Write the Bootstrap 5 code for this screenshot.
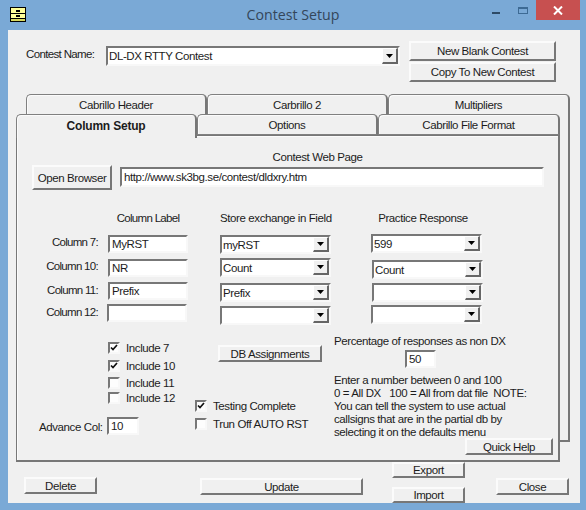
<!DOCTYPE html>
<html lang="en">
<head>
<meta charset="utf-8">
<title>Contest Setup</title>
<link href="https://cdn.jsdelivr.net/npm/bootstrap@5.3.0/dist/css/bootstrap.min.css" rel="stylesheet">
<style>
html,body{margin:0;height:510px;width:586px;overflow:hidden}
body{background:#7aa9d6;font:11.5px/14px "Liberation Sans",Arial,sans-serif;color:#1c1c1c;letter-spacing:-.4px}
.win-title{height:30px;display:grid;grid-template-columns:1fr auto 1fr}
.win-icon{margin:7px 0 0 10px;display:block}
.win-name{font:14.2px/30px "Open Sans",sans-serif;color:#34465a;letter-spacing:0}
.win-ctrls{display:flex;justify-content:flex-end;margin-right:6px;align-items:flex-start}
.win-min{width:8px;height:2px;background:#2d4a66;margin:12px 18px 0 0}
.win-max{width:10px;height:7px;border:1px solid #3d6a94;border-top-width:2px;margin:7px 8px 0 0}
.win-close{width:44px;height:20px;background:#c75050;color:#fff;display:flex;align-items:center;justify-content:center}
.client{margin:0 6px 0 8px;height:473px;background:#f0f0f0}
.top-row{padding-top:11px;height:52px}
.name-lbl{margin:6px 0 0 18px;width:80px;letter-spacing:-.65px}
.name-combo{margin-top:5px;width:294px;height:20px}
.stack-top{margin-left:9px;width:147px}
.btn.raised{padding:0;border-radius:0;background:#f0f0f0;color:#1c1c1c;font:inherit;letter-spacing:inherit;border:2px solid;border-color:#fbfbfb #777 #777 #fbfbfb;line-height:12px;display:block}
.h20{height:20px}.h25{height:25px}.h17{height:17px}.h16{height:16px}
.form-control.sunken{padding:0 2px;border-radius:0;background:#fff;color:#1c1c1c;font:inherit;letter-spacing:inherit;min-height:0;border:2px solid;border-color:#777 #f8f8f8 #f8f8f8 #777;box-shadow:none}
.input-group.combo{flex-wrap:nowrap;border:2px solid;border-color:#777 #f8f8f8 #f8f8f8 #777;background:#fff;align-items:stretch}
.combo .form-control.sunken{border:0;height:100%;background:transparent;padding:0 1px}
.combo .btn.raised{margin:0;width:16px;flex:none;border-radius:0;border-width:1px;border-color:#fff #666 #666 #fff;border-right-width:2px;border-bottom-width:2px;display:flex;align-items:center;justify-content:center;background:#f0f0f0}
.tab-row{flex-wrap:nowrap}
.back-tabs{margin:12px 0 0 18px;height:20px}
.nav-link.tab-item{padding:0;color:#1c1c1c;border:1px solid #808080;border-right:2px solid #777;border-bottom:0;border-radius:5px 5px 0 0;background:#f0f0f0;box-shadow:inset 1px 1px 0 #fbfbfb;display:flex;align-items:center;justify-content:center;height:100%}
.t181{width:181px}.t182{width:182px}
.sheet{margin-left:8px;width:554px;height:328px;border-right:2px solid #777;border-bottom:2px solid #777;box-sizing:border-box}
.front-tabs{height:21px;position:relative;z-index:2}
.nav-link.tab-on{height:24px;font-weight:700;letter-spacing:-.2px;padding-bottom:2px;border-bottom:0;box-shadow:inset 1px 1px 0 #fbfbfb;font-size:12px}
.tab-off{border-bottom:1px solid #808080!important}
.panel-main{width:544px;height:327px;background:#f0f0f0;border:solid #777;border-width:1px 2px 2px 1px;position:relative;box-shadow:inset 1px 1px 0 #fbfbfb}
.web-cap{margin-top:14px;padding-left:60px;text-align:center}
.web-row{margin-top:1px}
.open-btn{margin-left:15px;width:80px}
.url-in{margin:2px 0 0 8px;width:424px;height:20px}
.fields{margin-top:21px;height:115px}
.f-labels{width:81px;text-align:right;letter-spacing:-.7px}
.f-head{height:14px;text-align:center;white-space:nowrap}
.f-inputs{margin-left:10px;width:80px}
.f-inputs .f-head{letter-spacing:-.7px}
.f-store{margin-left:32px;width:111px}
.f-prac{margin-left:40px;width:112px}
.f-prac .f-head{padding-right:8px}
.h18{height:18px}.h19{height:19px}
.ctl-w{width:80px}.cmb-w{width:111px}
.chk{display:flex;align-items:center;height:14px;margin:0;padding:0;min-height:0;white-space:nowrap}
.mt1{margin-top:1px}.mt3{margin-top:3px}.mt4{margin-top:4px}.mt5{margin-top:5px}.mt6{margin-top:6px}.mt7{margin-top:7px}.mt8{margin-top:8px}.mt9{margin-top:9px}.mt10{margin-top:10px}.ml-1px{margin-left:-1px}.ml1{margin-left:1px}
.lower{margin-top:8px}
.col-a{width:178px}
.form-check-input.chk-box{width:12px;height:12px;flex:none;margin:0 6px 0 0;border-radius:0;background-color:#fdfdfd;border:2px solid;border-color:#777 #f8f8f8 #f8f8f8 #777;box-shadow:none;float:none;opacity:1}
.form-check-input.chk-box:checked{background-color:#fdfdfd;background-size:100%;background-image:url("data:image/svg+xml,%3Csvg xmlns='http://www.w3.org/2000/svg' viewBox='0 0 8 8'%3E%3Cpath d='M1 3.5l2 2 4-4.5' fill='none' stroke='%23111' stroke-width='1.7'/%3E%3C/svg%3E")}
.chks{margin-left:91px}
.adv-row{margin:12px 0 0 22px}
.adv-lbl{width:68px;white-space:nowrap;padding-top:3px}
.adv-in{width:32px;height:18px}
.col-b{width:139px}
.db-btn{margin:11px 0 0 23px;width:104px}
.chk.tc-row{margin-top:37px}
.col-c{width:224px;white-space:nowrap}
.pct-in{margin:2px 0 0 71px;width:31px;height:18px}
.note-txt{margin:6px 0 0;line-height:13px}
.help-btn{margin:-1px 0 0 131px;width:88px}
.bottom-row{margin-top:20px}
.b-del{margin:15px 0 0 16px;width:73px}
.b-upd{margin:16px 0 0 103px;width:163px}
.b-stack{margin-left:29px;width:73px}
.b-imp{margin-top:9px}
.b-close{margin:16px 0 0 31px;width:73px}
</style>
</head>
<body>
<div class="win-title">
  <svg class="win-icon" width="16" height="15" viewBox="0 0 16 15"><rect x=".5" y=".5" width="15" height="14" fill="#ffff99" stroke="#000"/><path d="M1 6.5h14M1 11.5h14" stroke="#000"/><path d="M1 12h14v2H1z" fill="#d8d860"/><path d="M6 3h4v2H6zM6 8h4v2H6z" fill="#000"/></svg>
  <div class="win-name text-center">Contest Setup</div>
  <div class="win-ctrls">
    <div class="win-min"></div><div class="win-max"></div>
    <div class="win-close"><svg width="10" height="9" viewBox="0 0 10 9"><path d="M1 .5l8 8M9 .5l-8 8" stroke="#fff" stroke-width="2"/></svg></div>
  </div>
</div>
<div class="client">
  <div class="top-row d-flex">
    <label class="name-lbl">Contest Name:</label>
    <div class="input-group combo name-combo"><input class="form-control sunken" value="DL-DX RTTY Contest"><button class="btn raised" type="button"><svg width="7" height="4" viewBox="0 0 7 4"><path d="M0 0h7L3.5 4z" fill="#000"/></svg></button></div>
    <div class="stack-top">
      <button class="btn raised w-100 h20" type="button">New Blank Contest</button>
      <button class="btn raised w-100 h20 mt1" type="button">Copy To New Contest</button>
    </div>
  </div>
  <div class="nav tab-row back-tabs">
    <a class="nav-link tab-item t181">Cabrillo Header</a>
    <a class="nav-link tab-item t181">Carbrillo 2</a>
    <a class="nav-link tab-item t182">Multipliers</a>
  </div>
  <div class="sheet">
    <div class="nav tab-row front-tabs">
      <a class="nav-link tab-item tab-on t181">Column Setup</a>
      <a class="nav-link tab-item tab-off t181">Options</a>
      <a class="nav-link tab-item tab-off t182">Cabrillo File Format</a>
    </div>
    <div class="panel-main">
      <div class="web-cap">Contest Web Page</div>
      <div class="web-row d-flex">
        <button class="btn raised open-btn h25" type="button">Open Browser</button>
        <input class="form-control sunken url-in" value="http://www.sk3bg.se/contest/dldxry.htm">
      </div>
      <div class="fields d-flex">
        <div class="f-labels">
          <div class="f-head"></div>
          <div class="mt10">Column 7:</div>
          <div class="mt10">Column 10:</div>
          <div class="mt10">Column 11:</div>
          <div class="mt8">Column 12:</div>
        </div>
        <div class="f-inputs">
          <div class="f-head">Column Label</div>
          <input class="form-control sunken ctl-w h18 mt10" value="MyRST">
          <input class="form-control sunken ctl-w h18 mt6" value="NR">
          <input class="form-control sunken ctl-w h18 mt5" value="Prefix">
          <input class="form-control sunken ctl-w h18 mt4 ml-1px" value="">
        </div>
        <div class="f-store">
          <div class="f-head">Store exchange in Field</div>
          <div class="input-group combo cmb-w h19 mt10"><input class="form-control sunken" value="myRST"><button class="btn raised" type="button"><svg width="7" height="4" viewBox="0 0 7 4"><path d="M0 0h7L3.5 4z" fill="#000"/></svg></button></div>
          <div class="input-group combo cmb-w h19 mt4"><input class="form-control sunken" value="Count"><button class="btn raised" type="button"><svg width="7" height="4" viewBox="0 0 7 4"><path d="M0 0h7L3.5 4z" fill="#000"/></svg></button></div>
          <div class="input-group combo cmb-w h19 mt6"><input class="form-control sunken" value="Prefix"><button class="btn raised" type="button"><svg width="7" height="4" viewBox="0 0 7 4"><path d="M0 0h7L3.5 4z" fill="#000"/></svg></button></div>
          <div class="input-group combo cmb-w h19 mt4"><input class="form-control sunken" value=""><button class="btn raised" type="button"><svg width="7" height="4" viewBox="0 0 7 4"><path d="M0 0h7L3.5 4z" fill="#000"/></svg></button></div>
        </div>
        <div class="f-prac">
          <div class="f-head">Practice Response</div>
          <div class="input-group combo cmb-w h19 mt9"><input class="form-control sunken" value="599"><button class="btn raised" type="button"><svg width="7" height="4" viewBox="0 0 7 4"><path d="M0 0h7L3.5 4z" fill="#000"/></svg></button></div>
          <div class="input-group combo cmb-w h19 mt7 ml1"><input class="form-control sunken" value="Count"><button class="btn raised" type="button"><svg width="7" height="4" viewBox="0 0 7 4"><path d="M0 0h7L3.5 4z" fill="#000"/></svg></button></div>
          <div class="input-group combo cmb-w h19 mt4 ml1"><input class="form-control sunken" value=""><button class="btn raised" type="button"><svg width="7" height="4" viewBox="0 0 7 4"><path d="M0 0h7L3.5 4z" fill="#000"/></svg></button></div>
          <div class="input-group combo cmb-w h19 mt3"><input class="form-control sunken" value=""><button class="btn raised" type="button"><svg width="7" height="4" viewBox="0 0 7 4"><path d="M0 0h7L3.5 4z" fill="#000"/></svg></button></div>
        </div>
      </div>
      <div class="lower d-flex">
        <div class="col-a">
          <div class="chks">
            <label class="form-check chk mt7"><input class="form-check-input chk-box" type="checkbox" checked>Include 7</label>
            <label class="form-check chk mt4"><input class="form-check-input chk-box" type="checkbox" checked>Include 10</label>
            <label class="form-check chk mt3"><input class="form-check-input chk-box" type="checkbox">Include 11</label>
            <label class="form-check chk mt1"><input class="form-check-input chk-box" type="checkbox">Include 12</label>
          </div>
          <div class="adv-row d-flex">
            <label class="adv-lbl">Advance Col:</label>
            <input class="form-control sunken adv-in" value="10">
          </div>
        </div>
        <div class="col-b">
          <button class="btn raised db-btn h17" type="button">DB Assignments</button>
          <label class="form-check chk tc-row"><input class="form-check-input chk-box" type="checkbox" checked>Testing Complete</label>
          <label class="form-check chk mt4"><input class="form-check-input chk-box" type="checkbox">Trun Off AUTO RST</label>
        </div>
        <div class="col-c">
          <div>Percentage of responses as non DX</div>
          <input class="form-control sunken pct-in" value="50">
          <p class="note-txt">Enter a number between 0 and 100<br>0 = All DX &nbsp; 100 = All from dat file &nbsp;NOTE:<br>You can tell the system to use actual<br>callsigns that are in the partial db by<br>selecting it on the defaults menu</p>
          <button class="btn raised help-btn h17" type="button">Quick Help</button>
        </div>
      </div>
    </div>
  </div>
  <div class="bottom-row d-flex align-items-start">
    <button class="btn raised b-del h17" type="button">Delete</button>
    <button class="btn raised b-upd h17" type="button">Update</button>
    <div class="b-stack">
      <button class="btn raised w-100 h16" type="button">Export</button>
      <button class="btn raised w-100 h16 b-imp" type="button">Import</button>
    </div>
    <button class="btn raised b-close h17" type="button">Close</button>
  </div>
</div>
<script src="https://cdn.jsdelivr.net/npm/bootstrap@5.3.0/dist/js/bootstrap.bundle.min.js"></script>
</body>
</html>
